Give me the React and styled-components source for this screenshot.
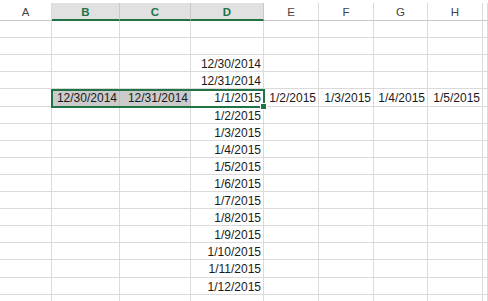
import styled, { createGlobalStyle } from 'styled-components'

const GlobalStyle = createGlobalStyle`
  html, body {
    margin: 0;
    background: #ffffff;
  }
  body {
    font-family: "Liberation Sans", Arial, sans-serif;
    overflow: hidden;
  }
`

// the last column is cut off by the window edge, so it shows no label
const columns = [
    { name: 'A', width: 52 },
    { name: 'B', width: 68, selected: true },
    { name: 'C', width: 71, selected: true },
    { name: 'D', width: 73, selected: true },
    { name: 'E', width: 55 },
    { name: 'F', width: 55 },
    { name: 'G', width: 54 },
    { name: 'H', width: 55 },
    { name: 'I', width: 0, hidden: true },
]

const ROW_COUNT = 17
const HEADER_HEIGHT = 18
const TOP_GAP = 3

// rows are a touch over 17px in the screenshot, so round the cumulative edges
const rowTops = Array.from({ length: ROW_COUNT + 1 }, (_, i) => Math.round(i * 17.1))
const rowHeights = rowTops.slice(1).map((t, i) => t - rowTops[i])

const cells = {
    3: { D: '12/30/2014' },
    4: { D: '12/31/2014' },
    5: {
        B: '12/30/2014',
        C: '12/31/2014',
        D: '1/1/2015',
        E: '1/2/2015',
        F: '1/3/2015',
        G: '1/4/2015',
        H: '1/5/2015',
    },
}
for (let d = 2; d <= 12; d++) {
    cells[d + 4] = { D: `1/${d}/2015` }
}

const Sheet = styled.div`
  position: relative;
  height: 301px;
  padding-top: ${TOP_GAP}px;
  box-sizing: border-box;
  overflow: hidden;
`

const Grid = styled.div`
  display: grid;
  grid-template-columns: ${columns.map(c => (c.width ? `${c.width}px` : '1fr')).join(' ')};
  grid-template-rows: ${HEADER_HEIGHT}px ${rowHeights.map(h => `${h}px`).join(' ')};
`

const HeaderCell = styled.div`
  box-sizing: border-box;
  display: flex;
  align-items: center;
  justify-content: center;
  background: ${props => (props.$selected ? '#e1e1e1' : '#ffffff')};
  border-right: 1px solid ${props => (props.$selected ? '#c9c9c9' : '#dadada')};
  border-bottom: ${props => (props.$selected ? '2px solid #217346' : '1px solid #c8c8c8')};
  color: ${props => (props.$selected ? '#217346' : '#444444')};
  font-weight: ${props => (props.$selected ? 700 : 400)};
  font-size: 11.5px;
  padding-top: ${props => (props.$selected ? '1px' : '0')};
`

const Cell = styled.div`
  box-sizing: border-box;
  background: ${props => (props.$highlight ? '#cbcbcb' : '#ffffff')};
  border-right: 1px solid ${props => (props.$highlight ? '#bdbdbd' : '#dadada')};
  border-bottom: 1px solid #dadada;
  padding: 1px 2px 0;
  text-align: right;
  font-size: 12px;
  line-height: 16px;
  color: #1a1a1a;
  white-space: nowrap;
`

const Selection = styled.div`
  position: absolute;
  box-sizing: border-box;
  border: 2px solid #217346;
  pointer-events: none;
`

const FillHandle = styled.div`
  position: absolute;
  right: -4px;
  bottom: -4px;
  width: 5px;
  height: 5px;
  background: #217346;
  border: 1px solid #ffffff;
`

const colLeft = index => columns.slice(0, index).reduce((sum, c) => sum + c.width, 0)

const App = () => {
    const selLeft = colLeft(1) - 1
    const selRight = colLeft(4)
    const selTop = TOP_GAP + HEADER_HEIGHT + rowTops[4]
    const selBottom = TOP_GAP + HEADER_HEIGHT + rowTops[5] + 1

    return (
        <>
            <GlobalStyle />
            <Sheet>
                <Grid>
                    {columns.map(c => (
                        <HeaderCell key={c.name} $selected={c.selected}>
                            {c.hidden ? '' : c.name}
                        </HeaderCell>
                    ))}
                    {rowHeights.map((_, r) =>
                        columns.map(c => {
                            const row = r + 1
                            const value = cells[row] && cells[row][c.name]
                            const highlight = row === 5 && (c.name === 'B' || c.name === 'C')
                            return (
                                <Cell key={`${c.name}${row}`} $highlight={highlight}>
                                    {value}
                                </Cell>
                            )
                        })
                    )}
                </Grid>
                <Selection
                    style={{
                        left: selLeft,
                        top: selTop,
                        width: selRight - selLeft + 1,
                        height: selBottom - selTop,
                    }}
                >
                    <FillHandle />
                </Selection>
            </Sheet>
        </>
    )
}

export default App
